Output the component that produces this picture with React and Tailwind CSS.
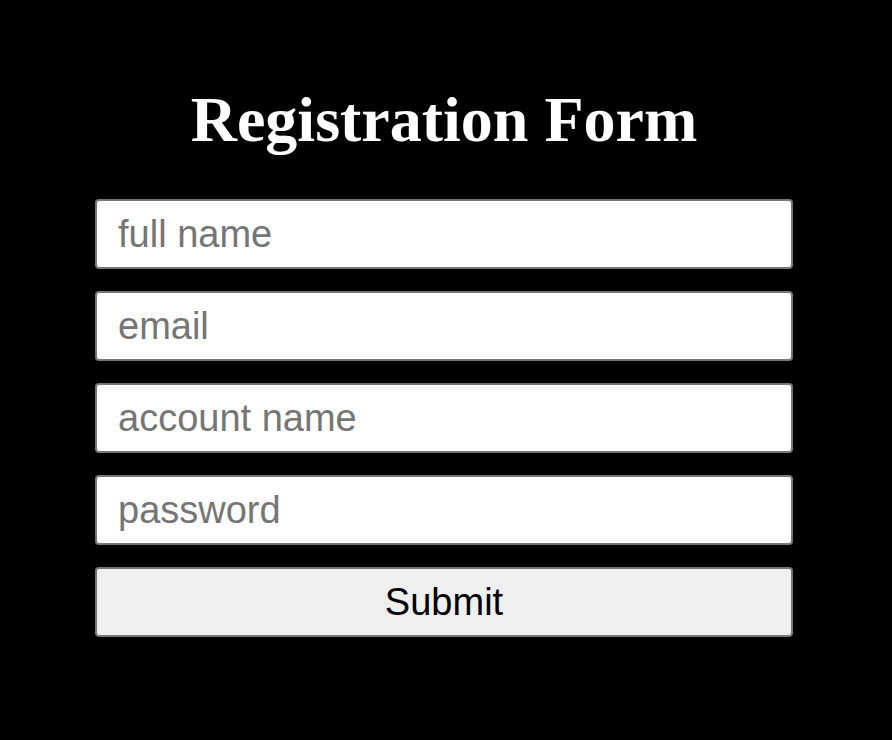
export default function App() {
  return (
    <div className="min-h-screen w-full bg-black pt-[88px]">
      <form className="ml-[95px] flex w-[698px] flex-col" onSubmit={(e) => e.preventDefault()}>
        <h1 className="mb-[47px] text-center font-['Liberation_Serif',serif] text-[64px] font-bold leading-[1] text-white">
          Registration Form
        </h1>
        <div className="flex flex-col gap-[22px]">
          {['full name', 'email', 'account name', 'password'].map((p) => (
            <input
              key={p}
              type={p === 'password' ? 'password' : 'text'}
              placeholder={p}
              className="h-[70px] w-full rounded-[4px] border-2 border-[#767676] bg-white px-[21px] font-['Liberation_Sans',sans-serif] text-[38px] text-black placeholder:text-[#757575] outline-none"
            />
          ))}
          <button
            type="submit"
            className="h-[70px] w-full rounded-[4px] border-2 border-[#767676] bg-[#efefef] font-['Liberation_Sans',sans-serif] text-[38px] text-black"
          >
            Submit
          </button>
        </div>
      </form>
    </div>
  );
}
